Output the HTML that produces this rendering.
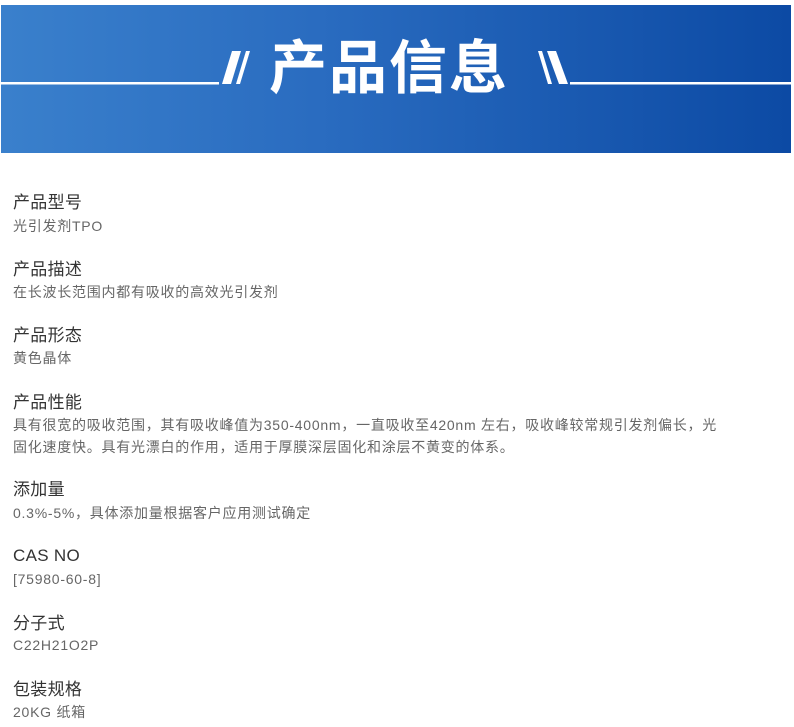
<!DOCTYPE html>
<html><head><meta charset="utf-8"><style>
body{margin:0;width:794px;height:727px;background:#fff;font-family:"Liberation Sans","Noto Sans CJK SC",sans-serif;position:relative;overflow:hidden}
.hd{position:absolute;left:1px;top:5px;width:790px;height:148px;background:linear-gradient(90deg,#3a80cc,#2a6cc0 40%,#0c4aa4)}
.t{position:absolute;left:268px;top:26px;color:#fff;font-size:58px;font-weight:bold;letter-spacing:2px;line-height:64px;font-family:"Noto Sans CJK SC",sans-serif;white-space:nowrap}
.s{position:absolute;left:13px;white-space:nowrap}
.l{font-size:17px;color:#333;line-height:20px;letter-spacing:.3px}
.v{font-size:14px;color:#666;line-height:22px;letter-spacing:.75px}
</style></head><body>
<div class="hd">
<svg width="790" height="148" style="position:absolute;left:0;top:0">
<rect x="0" y="77" width="218" height="2.5" fill="#fff"/>
<rect x="569" y="77" width="221" height="2.5" fill="#fff"/>
<polygon points="231,46 240,46 230,79 221,79" fill="#fff"/>
<polygon points="245,46 249,46 239,79 235,79" fill="#fff"/>
<polygon points="537,46 541,46 551,79 547,79" fill="#fff"/>
<polygon points="546,46 555,46 567,79 558,79" fill="#fff"/>
</svg>
<div class="t">产品信息</div>
</div>
<div class="s l" style="top:193px">产品型号</div><div class="s v" style="top:215px">光引发剂TPO</div>
<div class="s l" style="top:260px">产品描述</div><div class="s v" style="top:281px">在长波长范围内都有吸收的高效光引发剂</div>
<div class="s l" style="top:326px">产品形态</div><div class="s v" style="top:347px">黄色晶体</div>
<div class="s l" style="top:393px">产品性能</div><div class="s v" style="top:414px">具有很宽的吸收范围，其有吸收峰值为350-400nm，一直吸收至420nm 左右，吸收峰较常规引发剂偏长，光<br>固化速度快。具有光漂白的作用，适用于厚膜深层固化和涂层不黄变的体系。</div>
<div class="s l" style="top:480px">添加量</div><div class="s v" style="top:502px">0.3%-5%，具体添加量根据客户应用测试确定</div>
<div class="s l" style="top:546px">CAS NO</div><div class="s v" style="top:568px">[75980-60-8]</div>
<div class="s l" style="top:614px">分子式</div><div class="s v" style="top:634px">C22H21O2P</div>
<div class="s l" style="top:680px">包装规格</div><div class="s v" style="top:701px">20KG 纸箱</div>
</body></html>
